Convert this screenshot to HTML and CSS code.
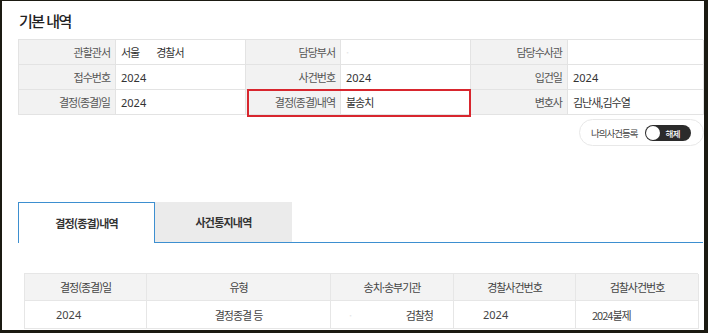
FILE: index.html
```html
<!DOCTYPE html>
<html lang="ko">
<head>
<meta charset="utf-8">
<link rel="stylesheet" href="styles.css">
</head>
<body>
<div class="frame">
  <h2 class="title">기본 내역</h2>
  <div class="info">
    <div class="lbl">관할관서</div>
    <div class="val">서울<span class="gap">경찰서</span></div>
    <div class="lbl">담당부서</div>
    <div class="val"><span class="mask">·</span></div>
    <div class="lbl">담당수사관</div>
    <div class="val"></div>

    <div class="lbl">접수번호</div>
    <div class="val num">2024</div>
    <div class="lbl">사건번호</div>
    <div class="val num">2024</div>
    <div class="lbl">입건일</div>
    <div class="val num">2024</div>

    <div class="lbl">결정(종결)일</div>
    <div class="val num">2024</div>
    <div class="lbl">결정(종결)내역</div>
    <div class="val">불송치</div>
    <div class="lbl">변호사</div>
    <div class="val">김난새,김수열</div>

    <div class="highlight"></div>
  </div>

  <div class="toggle-row">
    <div class="toggle-pill">
      <span class="toggle-label">나의사건등록</span>
      <span class="switch"><span class="knob"></span><span class="switch-text">해제</span></span>
    </div>
  </div>

  <div class="tabs">
    <div class="tab active">결정(종결)내역</div>
    <div class="tab">사건통지내역</div>
  </div>

  <div class="list">
    <div class="th">결정(종결)일</div>
    <div class="th">유형</div>
    <div class="th">송치·송부기관</div>
    <div class="th">경찰사건번호</div>
    <div class="th">검찰사건번호</div>

    <div class="td num c1">2024</div>
    <div class="td c2">결정종결 등</div>
    <div class="td c3"><span class="mask">·</span><span>검찰청</span></div>
    <div class="td num c4">2024</div>
    <div class="td c5">2024불제</div>
  </div>
</div>
</body>
</html>
```

FILE: styles.css
```css
html, body {
  margin: 0;
  padding: 0;
  background: #ffffff;
}

body {
  font-family: "Noto Sans CJK KR", "Noto Sans", sans-serif;
  color: #333;
}

.frame {
  width: 708px;
  height: 333px;
  box-sizing: border-box;
  border-style: solid;
  border-color: #1b1a12;
  border-width: 1px 4px 3px 2px;
  padding: 0 0 0 16px;
  overflow: hidden;
  background: #fff;
}

.title {
  margin: 10px 0 8px 1px;
  font-size: 15px;
  line-height: 20px;
  font-weight: 500;
  letter-spacing: -1.5px;
  color: #222;
}

/* info grid */
.info {
  position: relative;
  width: 685px;
  display: grid;
  grid-template-columns: 97px 130px 95px 130px 97px 136px;
  grid-auto-rows: 25px;
  border-top: 1px solid #e3e3e3;
  border-left: 1px solid #e3e3e3;
  box-sizing: border-box;
}

.lbl, .val {
  border-right: 1px solid #e3e3e3;
  border-bottom: 1px solid #e3e3e3;
  display: flex;
  align-items: center;
  font-size: 11px;
  letter-spacing: -1px;
  white-space: nowrap;
}

.lbl {
  background: #f2f2f2;
  justify-content: flex-end;
  padding-right: 5px;
  color: #555;
}

.val {
  padding-left: 5px;
  color: #333;
}

.num {
  font-family: "Noto Sans", sans-serif;
  font-size: 11px;
  letter-spacing: 0;
}

.gap {
  margin-left: 17px;
}

.mask {
  color: #e6e6e6;
}

.highlight {
  position: absolute;
  left: 228px;
  top: 49px;
  width: 224px;
  height: 28px;
  border: 2px solid #d8262e;
  box-sizing: border-box;
}

/* toggle */
.toggle-row {
  display: flex;
  justify-content: flex-end;
  margin-top: 4px;
}

.toggle-pill {
  width: 125px;
  height: 27px;
  box-sizing: border-box;
  border: 1px solid #e8e8e8;
  border-radius: 14px;
  display: flex;
  align-items: center;
  padding-left: 11px;
  gap: 8px;
}

.toggle-label {
  font-size: 9.5px;
  letter-spacing: -1px;
  color: #444;
}

.switch {
  width: 46px;
  height: 16px;
  border-radius: 8px;
  background: #2b2b2b;
  display: flex;
  align-items: center;
  padding: 0 1px;
  box-sizing: border-box;
}

.knob {
  width: 14px;
  height: 14px;
  border-radius: 50%;
  background: #fff;
}

.switch-text {
  color: #fff;
  font-size: 8.5px;
  font-weight: 500;
  letter-spacing: -0.5px;
  margin-left: 5px;
}

/* tabs */
.tabs {
  margin-top: 56px;
  width: 685px;
  display: flex;
  border-bottom: 1px solid #3d8fd0;
  height: 40px;
}

.tab {
  width: 137px;
  height: 40px;
  box-sizing: border-box;
  display: flex;
  align-items: center;
  justify-content: center;
  font-size: 11px;
  font-weight: 700;
  letter-spacing: -0.8px;
  color: #333;
  background: #ebebeb;
}

.tab.active {
  background: #fff;
  border: 1px solid #3d8fd0;
  border-bottom: none;
  height: 41px;
  margin-bottom: -1px;
}

/* list table */
.list {
  margin: 30px 0 0 6px;
  width: 674px;
  display: grid;
  grid-template-columns: 122px 184px 123px 122px 123px;
  grid-template-rows: 27px 28px;
  border-top: 1px solid #e6e6e6;
  border-left: 1px solid #e6e6e6;
  box-sizing: border-box;
}

.th, .td {
  border-right: 1px solid #e6e6e6;
  border-bottom: 1px solid #e6e6e6;
  display: flex;
  align-items: center;
  font-size: 11px;
  letter-spacing: -1px;
  white-space: nowrap;
  color: #444;
}

.th {
  background: #f3f3f3;
  justify-content: center;
}

.td.num {
  letter-spacing: 0;
}

.c1 { padding-left: 31px; }
.c2 { justify-content: center; }
.c3 { justify-content: space-between; padding: 0 20px 0 18px; }
.c4 { padding-left: 29px; }
.c5 { padding-left: 16px; }
```
